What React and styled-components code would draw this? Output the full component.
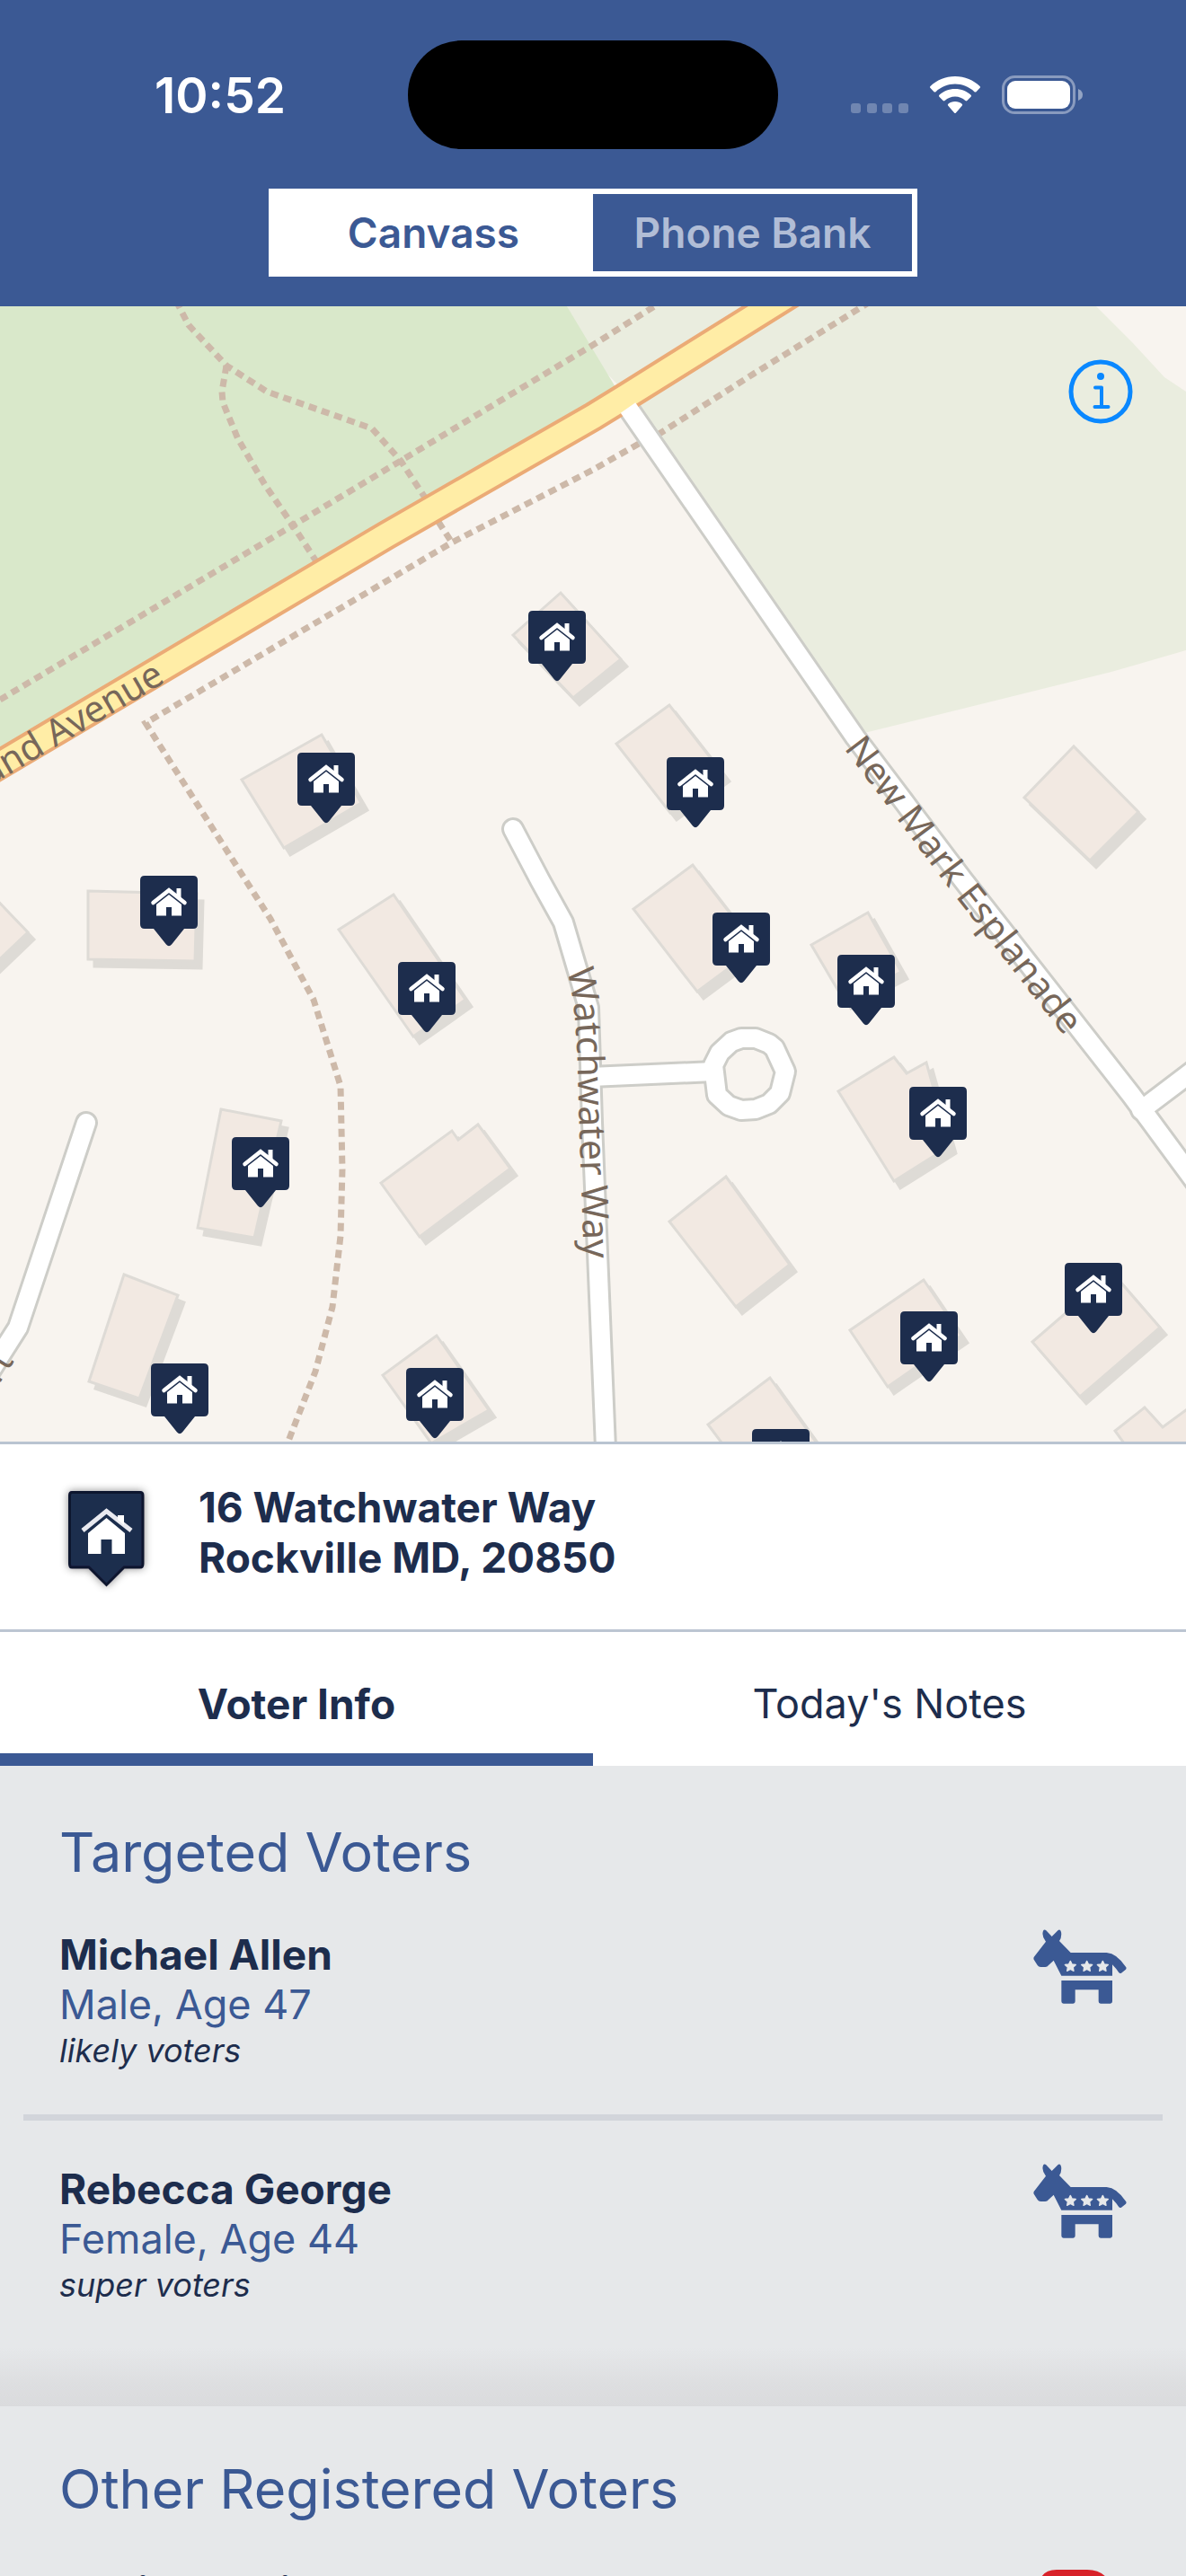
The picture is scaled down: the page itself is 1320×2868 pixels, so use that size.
import React, { useState } from 'react'
import styled, { createGlobalStyle } from 'styled-components';

const blue = '#3b5994'
const navy = '#1d2d4d'
const panelGrey = '#e6e8ea'

const GlobalStyle = createGlobalStyle`
    * {
      box-sizing: border-box;
    }

    body {
      margin: 0;
      font-family: Inter, "Liberation Sans", sans-serif;
      font-size: 45px;
      line-height: 56px;
      color: ${navy};
    }

    button {
      font: inherit;
      border: none;
      padding: 0;
      cursor: pointer;
    }
`;

const Screen = styled.div`
    display: flex;
    flex-direction: column;
    height: 100vh;
    overflow: hidden;
    background-color: white;
`;



/* ---------- header ---------- */

const Header = styled.header`
    flex: none;
    background-color: ${blue};
    padding: 45px 0 33px;
`;

const StatusBar = styled.div`
    display: grid;
    grid-template-columns: 1fr 412px 1fr;
    align-items: center;
    height: 121px;
    color: white;
`;

const Clock = styled.time`
    justify-self: end;
    padding-right: 136px;
    font-size: 55px;
    font-weight: 600;
`;

const Island = styled.div`
    height: 121px;
    border-radius: 60px;
    background-color: black;
`;

const StatusIcons = styled.div`
    display: flex;
    align-items: center;
    gap: 24px;
    padding-left: 81px;
`;

const Segmented = styled.div`
    display: flex;
    width: 722px;
    height: 98px;
    margin: 44px auto 0;
    border: 6px solid white;
`;

const Segment = styled.button`
    flex: 1;
    font-size: 46px;
    font-weight: 600;
    color: ${({ $active }) => ($active ? blue : '#b1bdd6')};
    background-color: ${({ $active }) => ($active ? 'white' : blue)};
`;



/* ---------- map ---------- */

const MapArea = styled.section`
    flex: none;
    position: relative;
    overflow: hidden;
    border-bottom: 3px solid #b9c4d1;

    > svg {
      display: block;
      width: 100%;
      height: auto;
    }
`;

const Pin = styled.button`
    position: absolute;
    left: ${({ $x }) => ($x / 1320) * 100}%;
    top: ${({ $y }) => ($y / 1264) * 100}%;
    width: 64px;
    height: 79px;
    margin-left: -32px;
    background: none;

    svg {
      display: block;
    }
`;

const InfoButton = styled.button`
    position: absolute;
    top: 59px;
    right: 59px;
    width: 72px;
    height: 72px;
    background: none;
`;

const StreetLabel = styled.text`
    font-family: "Noto Sans", sans-serif;
    font-size: 41px;
    fill: #77675a;
`;

/* ---------- details ---------- */

const AddressBar = styled.section`
    flex: none;
    display: flex;
    align-items: flex-start;
    gap: 50px;
    padding: 42px 66px 38px;
    border-bottom: 3px solid #bcc5d2;
`;

const Address = styled.address`
    font-size: 46px;
    font-style: normal;
    font-weight: 700;
`;

const Tabs = styled.div`
    flex: none;
    display: flex;
`;

const Tab = styled.button`
    flex: 1;
    color: ${navy};
    font-size: ${({ $active }) => ($active ? 46 : 45)}px;
    font-weight: ${({ $active }) => ($active ? 700 : 400)};
    background-color: white;
    padding: 52px 0 27px;
    border-bottom: 14px solid ${({ $active }) => ($active ? blue : 'white')};
`;

const Section = styled.section`
    flex: ${({ $grow }) => ($grow ? '1 0 0' : 'none')};
    min-height: 0;
    padding: ${({ $grow }) => ($grow ? '54px 0 0' : '58px 0 112px')};
    background: ${({ $grow }) => ($grow
      ? panelGrey
      : `linear-gradient(to top, #dadbdd, #dddee0 24px, ${panelGrey} 66px)`)};
`;

const SectionTitle = styled.h2`
    margin: 0 0 48px;
    padding: 0 66px;
    font-size: 61px;
    line-height: 76px;
    font-weight: 400;
    color: ${blue};
`;

const VoterList = styled.ul`
    list-style: none;
    margin: 0;
    padding: 0 26px;
`;

const Voter = styled.li`
    display: flex;
    justify-content: space-between;
    align-items: flex-start;
    padding: 0 40px;

    & + & {
      margin-top: 48px;
      padding-top: 48px;
      border-top: 7px solid #d2d5db;
    }
`;

const Name = styled.h3`
    margin: 0;
    font-size: 46px;
    font-weight: 700;
`;

const Detail = styled.p`
    margin: 0;
    color: ${blue};
`;

const Likelihood = styled.p`
    margin: 0;
    font-size: 36px;
    line-height: 46px;
    font-style: italic;
`;


/* ---------- drawings ---------- */

function SignalDots() {
  return (
    <svg width="64" height="60" viewBox="0 0 64 60" fill="#fff" fillOpacity="0.27">
      <rect x="0" y="39" width="11" height="11" rx="3" />
      <rect x="18" y="39" width="11" height="11" rx="3" />
      <rect x="35" y="39" width="11" height="11" rx="3" />
      <rect x="53" y="39" width="11" height="11" rx="3" />
    </svg>
  )
}

function Wifi() {
  return (
    <svg width="56" height="42" viewBox="0 0 56 42" fill="#fff">
      <path d="M28 0C39 0 48.500 4.200 55.500 11Q56.500 12 55.500 13L51.500 17.200Q50.500 18 49.500 17.200C43.500 11.600 36 8.600 28 8.600S12.500 11.600 6.500 17.200Q5.500 18 4.500 17.200L.5 13Q-.5 12 .5 11C7.500 4.200 17 0 28 0Z" />
      <path d="M28 14C35 14 41 16.600 45.600 20.800Q46.600 21.800 45.600 22.800L41.400 27Q40.400 27.800 39.400 27C36.200 24.200 32.300 22.600 28 22.600S19.800 24.200 16.600 27Q15.600 27.800 14.600 27L10.400 22.800Q9.400 21.800 10.400 20.800C15 16.600 21 14 28 14Z" />
      <path d="M28 28C31 28 33.600 29 35.700 30.800Q36.700 31.800 35.700 32.800L29 40.500Q28 41.500 27 40.500L20.300 32.800Q19.300 31.800 20.300 30.800C22.400 29 25 28 28 28Z" />
    </svg>
  )
}

function Battery() {
  return (
    <svg width="90" height="43" viewBox="0 0 90 43">
      <rect x="1.500" y="1.500" width="79" height="40" rx="13" fill="none" stroke="#fff" strokeOpacity="0.4" strokeWidth="3" />
      <rect x="6" y="6" width="70" height="31" rx="9" fill="#fff" />
      <path d="M85 15Q90 17 90 21.500T85 28Z" fill="#fff" fillOpacity="0.45" />
    </svg>
  )
}

function HousePin() {
  return (
    <svg width="64" height="79" viewBox="0 0 64 79">
      <path fill={navy} d="M5 0H59Q64 0 64 5V54Q64 59 59 59H49L35 76.500Q32 80 29 76.500L15 59H5Q0 59 0 54V5Q0 0 5 0Z" />
      <path fill="none" stroke="#fff" strokeWidth="4.500" strokeLinecap="round" d="M14.500 30L32 16.200L49.500 30" />
      <path fill="#fff" d="M40.500 14H45.500V27L40.500 23ZM32 21L46 32V44.500H35V35H29V44.500H18V32Z" />
    </svg>
  )
}

function AddressPin() {
  return (
    <svg width="105" height="126" viewBox="0 0 105 126" aria-hidden="true">
      <defs>
        <filter id="pinShadow" x="-20%" y="-20%" width="140%" height="140%">
          <feDropShadow dx="0" dy="0" stdDeviation="5" floodColor="#000" floodOpacity="0.45" />
        </filter>
      </defs>
      <path filter="url(#pinShadow)" fill={navy} stroke="#10132f" strokeWidth="3" d="M14 11.500H90Q93 11.500 93 15V91Q93 95 90 95H72L52.500 114.500L33 95H14Q11.500 95 11.500 91V15Q11.500 11.500 14 11.500Z" />
      <path fill="none" stroke="#e9eaf0" strokeWidth="5" d="M26 54L52.500 32.500L80 54" />
      <path fill="#fff" d="M65 37H72V48L65 42ZM52.500 40L73 57V80H58.500V64H46.500V80H32V57Z" />
    </svg>
  )
}

const star = '0,-18 5.500,-7 18,-5.500 9,3 11,15 0,9.500 -11,15 -9,3 -18,-5.500 -5.500,-7'

function Donkey() {
  return (
    <svg width="104" height="84" viewBox="153 87 312 252" role="img" aria-label="Democrat">
      <path fill={blue} d="M155 180L195 128Q180 110 186 92Q190 86 196 91L215 111L236 90Q243 86 246 96Q249 112 240 126L278 165H398Q432 167 463 214Q465 218 461 222L447 233Q443 236 439 232Q430 218 417 205V242H247L221 191L204 207Q200 213 193 213H178Q171 213 167 207L156 190Q153 186 155 180Z" />
      <path fill={blue} d="M247 258H417V328Q417 335 410 335H378Q371 335 371 328V289H293V328Q293 335 286 335H254Q247 335 247 328Z" />
      {[277, 332, 385].map((x) => (
        <polygon key={x} points={star} transform={`translate(${x} 211)`} fill={panelGrey} stroke={panelGrey} strokeWidth="4" strokeLinejoin="round" />
      ))}
    </svg>
  )
}

function Elephant() {
  return (
    <svg width="104" height="84" viewBox="0 0 104 84" fill="#d8222a" role="img" aria-label="Republican">
      <path d="M6 40V26Q6 4 26 4H60Q82 4 88 26L98 44V70H88V54L78 46H6Z" />
      <path d="M6 50H72V80H56V64H24V80H6Z" />
    </svg>
  )
}

const houses = [
  '624,660 571,707 638,777 691,734',
  '358,818 269,868 316,944 402,894',
  '745,785 686,828 746,905 805,862',
  '1195,831 1140,888 1213,958 1267,904',
  '98,992 219,995 217,1070 98,1068',
  '-40,964 31,1038 -40,1106',
  '438,996 377,1035 460,1154 518,1113',
  '771,963 705,1012 776,1104 842,1055',
  '966,1016 903,1052 940,1115 1003,1082',
  '246,1235 313,1248 283,1378 220,1367',
  '503,1259 510,1269 532,1252 568,1301 467,1377 424,1317',
  '995,1177 1009,1195 1031,1183 1057,1276 995,1315 933,1215',
  '808,1310 745,1360 819,1455 879,1408',
  '1028,1425 946,1481 988,1544 1070,1487',
  '1238,1417 1291,1478 1202,1555 1149,1494',
  '138,1419 198,1442 155,1557 99,1538',
  '486,1487 426,1531 480,1607 544,1570',
  '857,1534 788,1586 815,1622 910,1608',
  '1274,1567 1241,1593 1262,1622 1340,1622 1340,1555 1294,1589',
]

const footpaths = [
  'M0 779L326 585L446 513L660 384L738 335',
  'M196 335L210 362L252 407L297 436L414 477L446 513L473 554M488 581L503 604',
  'M252 407L247 436L248 448L265 489L295 540L326 585L354 628',
  'M711 494L660 523L503 604L162 805L274 981L301 1023L349 1113L379 1209L381 1302L379 1376L370 1455L351 1527L318 1612',
  'M732 484L839 416L970 335',
]

const streets = [
  'M699 454L952 821L1072 980L1259 1219L1340 1329',
  'M1270 1236L1340 1183',
  'M571 923L601 980L627 1027L655 1122L659 1250L674 1612',
  'M657 1199L794 1193',
  'M794 1186L801 1172L814 1160L825 1156H841L856 1162L862 1167L874 1193L868 1217L856 1229L841 1235L825 1236L811 1231L798 1219Z',
  'M96 1250L20 1478L-20 1541',
]

const avenue = 'M-30 869L0 851L430 596L660 464L699 440L920 302'

const pins = [
  [620, 339], [363, 497], [774, 502], [188, 634], [475, 730], [825, 675], [964, 722],
  [1044, 869], [290, 925], [1217, 1065], [1034, 1119], [200, 1177], [484, 1182], [869, 1250],
]

function StreetMap() {
  return (
    <svg viewBox="0 341 1320 1264">
      <rect y="341" width="1320" height="1264" fill="#f8f4ef" />
      <path fill="#eaeddf" d="M631 341H1220L1260 381L1296 420L1320 436V724L1237 748L962 816L699 440L660 400Z" />
      <path fill="#d9e8ca" d="M0 341H631L688 436L660 464L430 596L0 851Z" />
      {houses.map((points) => (
        <g key={points} strokeWidth="3">
          <polygon points={points} transform="translate(7 8)" fill="#dedbd6" stroke="#dedbd6" />
          <polygon points={points} fill="#f2e9e2" stroke="#dedbd6" />
        </g>
      ))}
      <g fill="none" stroke="#cdb9a9" strokeWidth="7" strokeDasharray="9 6">
        {footpaths.map((d) => <path key={d} d={d} />)}
      </g>
      <g fill="none" stroke="#cdcdc8" strokeWidth="26" strokeLinejoin="round">
        {streets.map((d) => <path key={d} d={d} strokeLinecap={d.startsWith('M699') ? 'butt' : 'round'} />)}
      </g>
      <path d={avenue} fill="none" stroke="#ebab76" strokeWidth="34" />
      <path d={avenue} fill="none" stroke="#ffeda6" strokeWidth="26" />
      <g fill="none" stroke="#fff" strokeWidth="20" strokeLinejoin="round">
        {streets.map((d) => <path key={d} d={d} strokeLinecap={d.startsWith('M699') ? 'butt' : 'round'} />)}
      </g>
      <defs>
        <path id="maryland" d="M-295 1043L185 759" />
        <path id="esplanade" d="M939 833L1060 994L1210 1186" />
        <path id="watchwater" d="M631 1080Q642 1122 643 1200L651 1440" />
        <path id="court" d="M-90 1679L16 1515" />
      </defs>
      <StreetLabel textAnchor="end"><textPath href="#maryland" startOffset="100%">Maryland Avenue</textPath></StreetLabel>
      <StreetLabel><textPath href="#esplanade">New Mark Esplanade</textPath></StreetLabel>
      <StreetLabel><textPath href="#watchwater">Watchwater Way</textPath></StreetLabel>
      <StreetLabel textAnchor="end"><textPath href="#court" startOffset="100%">Court</textPath></StreetLabel>
    </svg>
  )
}


const targeted = [
  { name: 'Michael Allen', detail: 'Male, Age 47', likelihood: 'likely voters' },
  { name: 'Rebecca George', detail: 'Female, Age 44', likelihood: 'super voters' },
]

export default function App() {

  const [mode, setMode] = useState('Canvass')
  const [tab, setTab] = useState('Voter Info')

  return (
    <Screen>
      <GlobalStyle />
      <Header>
        <StatusBar>
          <Clock>10:52</Clock>
          <Island />
          <StatusIcons>
            <SignalDots />
            <Wifi />
            <Battery />
          </StatusIcons>
        </StatusBar>
        <Segmented>
          {['Canvass', 'Phone Bank'].map((label) => (
            <Segment key={label} $active={mode === label} onClick={() => setMode(label)}>{label}</Segment>
          ))}
        </Segmented>
      </Header>

      <MapArea>
        <StreetMap />
        {pins.map(([x, y]) => (
          <Pin key={`${x}-${y}`} $x={x} $y={y} aria-label="House">
            <HousePin />
          </Pin>
        ))}
        <InfoButton aria-label="Map information">
          <svg width="72" height="72" viewBox="0 0 72 72" fill="none" stroke="#0a88ff" strokeWidth="5" strokeLinecap="round" strokeLinejoin="round">
            <circle cx="36" cy="36" r="33" />
            <circle cx="36" cy="19" r="4" fill="#0a88ff" stroke="none" />
            <path strokeWidth="4" d="M30 31.500H37V53M29.500 53H44.500" />
          </svg>
        </InfoButton>
      </MapArea>

      <AddressBar>
        <AddressPin />
        <Address>16 Watchwater Way<br />Rockville MD, 20850</Address>
      </AddressBar>

      <Tabs>
        {['Voter Info', "Today's Notes"].map((label) => (
          <Tab key={label} $active={tab === label} onClick={() => setTab(label)}>{label}</Tab>
        ))}
      </Tabs>

      <Section>
        <SectionTitle>Targeted Voters</SectionTitle>
        <VoterList>
          {targeted.map((voter) => (
            <Voter key={voter.name}>
              <div>
                <Name>{voter.name}</Name>
                <Detail>{voter.detail}</Detail>
                <Likelihood>{voter.likelihood}</Likelihood>
              </div>
              <Donkey />
            </Voter>
          ))}
        </VoterList>
      </Section>

      <Section $grow>
        <SectionTitle>Other Registered Voters</SectionTitle>
        <VoterList>
          <Voter>
            <Name>David Martin</Name>
            <Elephant />
          </Voter>
        </VoterList>
      </Section>
    </Screen>
  )
}
